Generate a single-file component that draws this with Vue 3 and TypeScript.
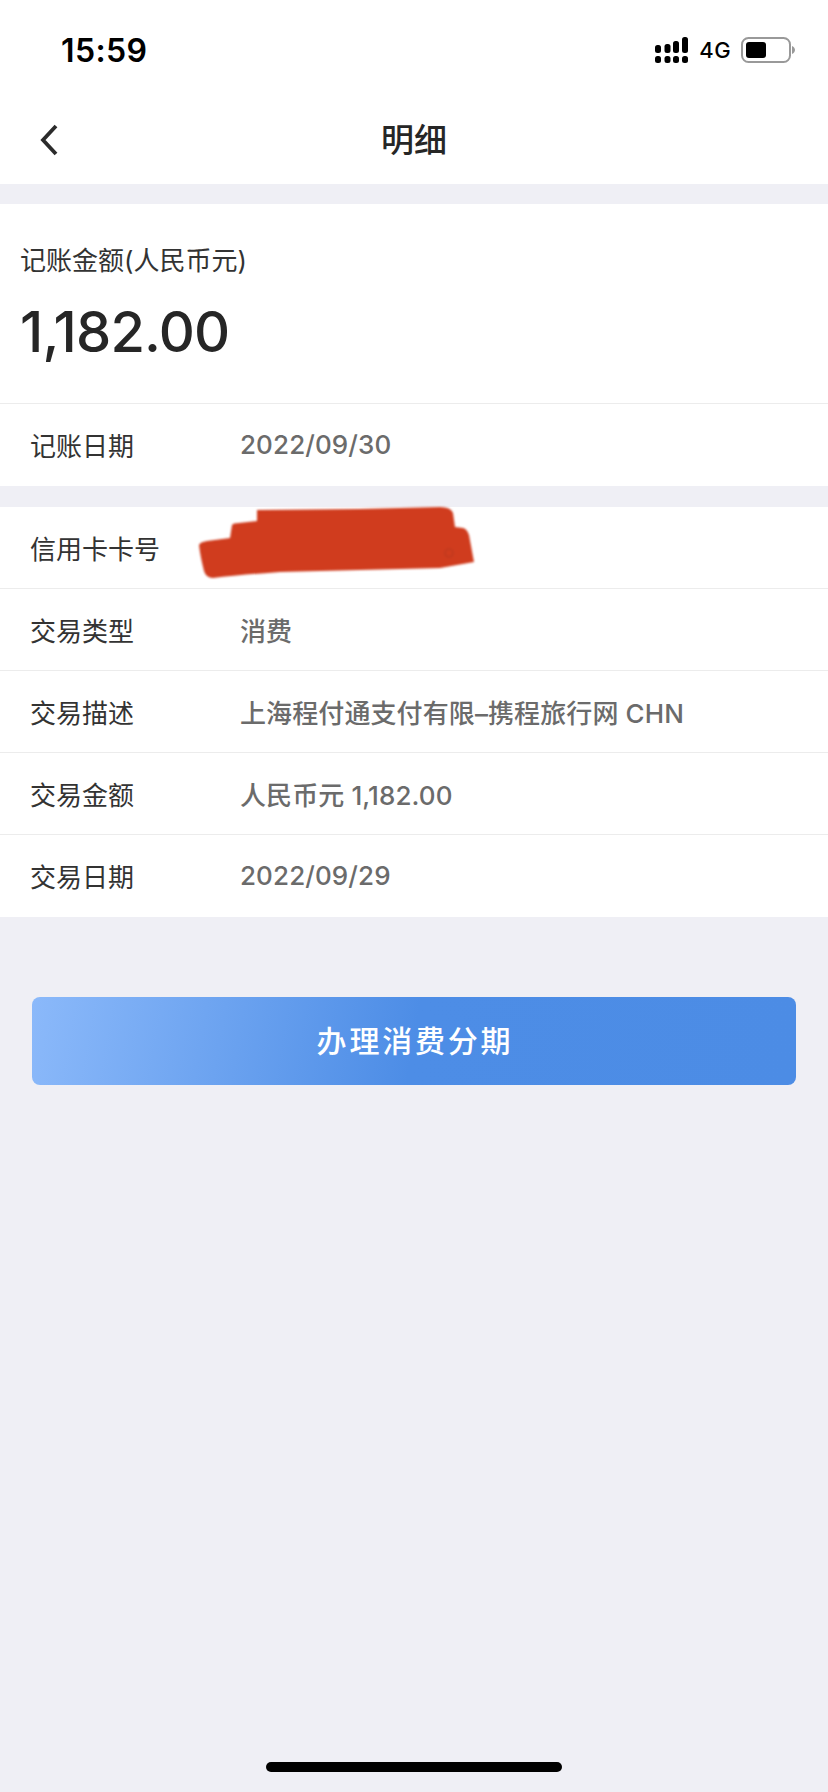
<template>
  <div class="page">
    <div class="status-bar">
      <span class="time">15:59</span>
      <div class="status-right">
        <svg class="signal" width="34" height="27" viewBox="0 0 34 27">
          <rect x="0" y="8" width="6" height="8" rx="2.5" />
          <rect x="9.5" y="7" width="6" height="9" rx="2.5" />
          <rect x="18" y="4" width="6" height="12" rx="2.5" />
          <rect x="27" y="0" width="6" height="16" rx="2.5" />
          <rect x="0" y="19" width="6" height="7" rx="2.5" />
          <rect x="9.5" y="19" width="6" height="7" rx="2.5" />
          <rect x="18" y="19" width="6" height="7" rx="2.5" />
          <rect x="27" y="19" width="6" height="7" rx="2.5" />
        </svg>
        <span class="net">4G</span>
        <svg class="battery" width="54" height="26" viewBox="0 0 54 26">
          <rect x="1" y="1" width="48" height="24" rx="6.5" fill="none" stroke="#999" stroke-width="2" />
          <rect x="5" y="5" width="20" height="16" rx="3" fill="#000" />
          <path d="M51 9 C53 10 54 11.5 54 13 C54 14.5 53 16 51 17 Z" fill="#999" />
        </svg>
      </div>
    </div>

    <header class="nav">
      <svg class="back" width="20" height="32" viewBox="0 0 20 32">
        <path d="M17 2 L4 16 L17 30" fill="none" stroke="#2b2b2b" stroke-width="3.8" />
      </svg>
      <h1 class="title">明细</h1>
    </header>

    <section class="card amount-card">
      <p class="amount-label">记账金额(人民币元)</p>
      <p class="amount">1,182.00</p>
    </section>
    <section class="card">
      <div class="row">
        <span class="label">记账日期</span>
        <span class="value">2022/09/30</span>
      </div>
    </section>

    <section class="card list">
      <div v-for="row in rows" :key="row.label" class="row">
        <span class="label">{{ row.label }}</span>
        <span class="value">{{ row.value }}</span>
        <svg v-if="row.masked" class="scribble" width="290" height="90" viewBox="0 0 290 90">
          <path
            d="M58 17 Q150 17 241 14 Q252 14 254 20 L256 34 L264 35 Q268 36 270 42 L275 69 L241 75 Q160 77 81 79 Q40 82 14 85 Q7 85 5 78 Q1 62 0 52 Q1 49 8 48 L31 45 L33 32 Q34 30 40 30 L58 28 Z"
            fill="#d03c1e"
          />
          <circle cx="250" cy="60" r="4" fill="none" stroke="#b9391f" stroke-width="1.2" />
        </svg>
      </div>
    </section>

    <div class="action">
      <button class="btn-primary" type="button">办理消费分期</button>
    </div>

    <div class="home-bar"></div>
  </div>
</template>

<script setup lang="ts">
interface DetailRow {
  label: string
  value: string
  masked?: boolean
}

const rows: DetailRow[] = [
  { label: '信用卡卡号', value: '', masked: true },
  { label: '交易类型', value: '消费' },
  { label: '交易描述', value: '上海程付通支付有限–携程旅行网 CHN' },
  { label: '交易金额', value: '人民币元 1,182.00' },
  { label: '交易日期', value: '2022/09/29' },
]
</script>

<style>
body {
  background: #efeff5;
}
</style>

<style scoped>
.page {
  position: relative;
  height: 1792px;
  overflow: hidden;
  background: #efeff5;
  font-family: Inter, "Noto Sans CJK SC", sans-serif;
}
.status-bar {
  display: flex;
  align-items: center;
  justify-content: space-between;
  box-sizing: border-box;
  height: 92px;
  padding: 8px 33px 0 61px;
  background: #fff;
}
.time {
  font-size: 32px;
  font-weight: 600;
  letter-spacing: 0.4px;
  color: #000;
}
.status-right {
  display: flex;
  align-items: center;
}
.signal {
  fill: #000;
}
.net {
  margin-left: 10px;
  margin-right: 10px;
  font-size: 22px;
  font-weight: 500;
  letter-spacing: 0.4px;
  color: #000;
}
.nav {
  position: relative;
  display: flex;
  align-items: center;
  justify-content: center;
  box-sizing: border-box;
  height: 92px;
  margin-bottom: 20px;
  background: #fff;
}
.back {
  position: absolute;
  left: 39px;
  top: 32px;
}
.title {
  margin: 0;
  font-size: 33px;
  font-weight: 500;
  color: #262626;
}
.card {
  background: #fff;
}
.amount-card {
  box-sizing: border-box;
  height: 200px;
  padding: 39px 20px 0;
  border-bottom: 1px solid #ececec;
}
.amount-label {
  margin: 0;
  font-size: 26px;
  line-height: 36px;
  color: #333;
}
.amount {
  margin: 19px 0 0;
  font-size: 56px;
  line-height: 68px;
  font-weight: 500;
  letter-spacing: -0.85px;
  color: #262626;
}
.list {
  margin-top: 21px;
}
.row {
  position: relative;
  display: flex;
  align-items: center;
  box-sizing: border-box;
  height: 82px;
  padding-left: 30px;
  padding-bottom: 1px;
  border-bottom: 1px solid #ececec;
}
.row:last-child {
  border-bottom: none;
}
.label {
  width: 210px;
  flex-shrink: 0;
  font-size: 26px;
  color: #333;
}
.value {
  font-size: 26px;
  font-weight: 500;
  letter-spacing: 0.1px;
  color: #6b6b6b;
}
.scribble {
  position: absolute;
  left: 199px;
  top: -14px;
  filter: blur(0.8px);
}
.action {
  padding: 80px 32px 0;
}
.btn-primary {
  display: block;
  width: 100%;
  height: 88px;
  padding: 0 0 4px 2px;
  border: none;
  border-radius: 8px;
  background: linear-gradient(100deg, #8bb9fa 0%, #4d8de6 50%, #4c8ce5 100%);
  font-family: inherit;
  font-size: 30px;
  font-weight: 500;
  letter-spacing: 2.8px;
  color: #fff;
}
.home-bar {
  position: absolute;
  left: 266px;
  bottom: 20px;
  width: 296px;
  height: 10px;
  border-radius: 5px;
  background: #000;
}
</style>
